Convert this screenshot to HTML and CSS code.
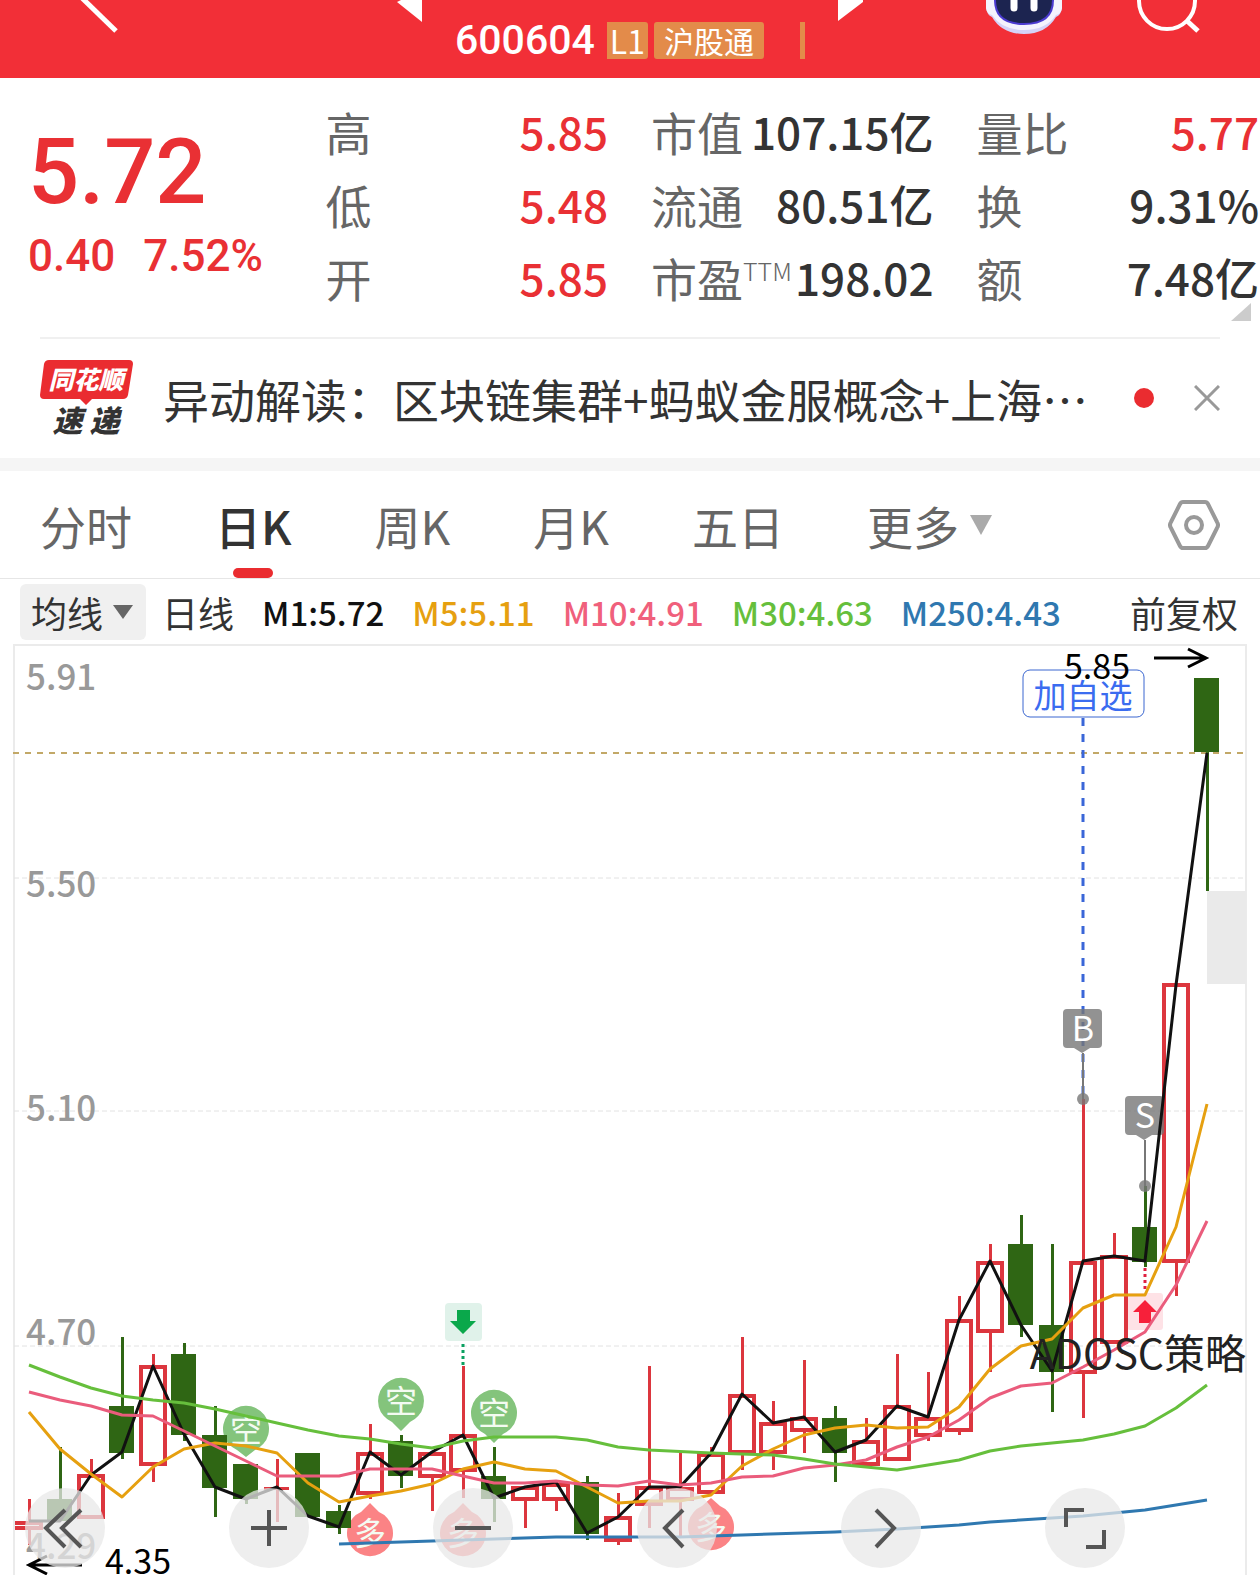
FILE: index.html
```html
<!DOCTYPE html>
<html lang="zh-CN">
<head>
  <meta charset="UTF-8">
  <meta name="viewport" content="width=device-width, initial-scale=1.0">
  <title>600604 日K</title>
  <link rel="stylesheet" href="styles.css">
</head>
<body>
  <header class="topbar">
    <button class="icon-btn back" type="button" aria-label="返回">
      <svg width="40" height="34" viewBox="0 0 40 34"><path d="M1 -3L36 31" stroke="#fff" stroke-width="5" fill="none"/></svg>
    </button>
    <button class="icon-btn" type="button" aria-label="上一只">
      <svg width="25" height="22" viewBox="0 0 25 22"><path d="M4 0L0 2L25 22V0Z" fill="#fff"/></svg>
    </button>
    <div class="stock">
      <span class="code">600604</span>
      <span class="tag tag-level">L1</span>
      <span class="tag">沪股通</span>
      <span class="tag-edge"></span>
    </div>
    <button class="icon-btn" type="button" aria-label="下一只">
      <svg width="25" height="22" viewBox="0 0 25 22"><path d="M0 0H25V2L0 21Z" fill="#fff"/></svg>
    </button>
    <button class="icon-btn robot" type="button" aria-label="助手">
      <svg width="76" height="35" viewBox="0 0 76 35">
        <path d="M0 0H76V8Q75 15 70 17Q60 34 38 34Q16 34 6 17Q1 15 0 8Z" fill="#d5d3f8"/>
        <path d="M0 0H76V8Q75 14 70 15Q60 30 38 30Q16 30 6 15Q1 14 0 8Z" fill="#f4f3fd"/>
        <path d="M8 0H68Q68 25 38 25Q8 25 8 0Z" fill="#4b3bd0"/>
        <path d="M10 0H66Q66 23 38 23Q10 23 10 0Z" fill="#1c2450"/>
        <path d="M28 -4V8M48 -4V8" stroke="#fff" stroke-width="7" stroke-linecap="round"/>
      </svg>
    </button>
    <button class="icon-btn search" type="button" aria-label="搜索">
      <svg width="64" height="34" viewBox="0 0 64 34">
        <circle cx="31" cy="1" r="28" fill="none" stroke="#fff" stroke-width="4"/>
        <path d="M50 20L62 31" stroke="#fff" stroke-width="5"/>
      </svg>
    </button>
  </header>

  <section class="quote">
    <div class="price-box">
      <div class="price">5.72</div>
      <div class="change"><span>0.40</span><span>7.52%</span></div>
    </div>
    <dl class="stats">
      <div><dt>高</dt><dd class="up">5.85</dd></div>
      <div><dt>低</dt><dd class="up">5.48</dd></div>
      <div><dt>开</dt><dd class="up">5.85</dd></div>
    </dl>
    <dl class="stats">
      <div><dt>市值</dt><dd>107.15亿</dd></div>
      <div><dt>流通</dt><dd>80.51亿</dd></div>
      <div><dt>市盈<small>TTM</small></dt><dd>198.02</dd></div>
    </dl>
    <dl class="stats">
      <div><dt>量比</dt><dd class="up">5.77</dd></div>
      <div><dt>换</dt><dd>9.31%</dd></div>
      <div><dt>额</dt><dd>7.48亿</dd></div>
    </dl>
    <svg class="corner" width="20" height="18" viewBox="0 0 20 18"><path d="M20 0V18H0Z" fill="#ccc"/></svg>
  </section>

  <section class="news">
    <svg class="news-logo" width="94" height="78" viewBox="0 0 94 78">
      <path d="M9 1H89Q93 1 93 5L88 36Q87 40 83 40H52L46 46L40 40H4Q0 40 0 36L4 5Q5 1 9 1Z" fill="#ea2c30"/>
      <text class="logo-top" x="46" y="30">同花顺</text>
      <text class="logo-sub" x="46" y="73">速 递</text>
    </svg>
    <a class="news-title" href="#">异动解读：区块链集群+蚂蚁金服概念+上海…</a>
    <span class="dot"></span>
    <button class="icon-btn close" type="button" aria-label="关闭">
      <svg width="26" height="26" viewBox="0 0 26 26"><path d="M1 1L25 25M25 1L1 25" stroke="#999" stroke-width="3"/></svg>
    </button>
  </section>

  <nav class="tabs">
    <button type="button">分时</button>
    <button type="button" class="active">日K</button>
    <button type="button">周K</button>
    <button type="button">月K</button>
    <button type="button">五日</button>
    <button type="button" class="more">更多<svg width="24" height="20" viewBox="0 0 24 20"><path d="M1 0H23L12 20Z" fill="#aaa"/></svg></button>
    <button type="button" class="settings" aria-label="设置">
      <svg width="52" height="50" viewBox="0 0 52 50" fill="none" stroke="#999" stroke-width="4">
        <path d="M15 2H37Q39 2 40 4L49 22Q51 25 49 28L40 46Q39 48 37 48H15Q13 48 12 46L3 28Q1 25 3 22L12 4Q13 2 15 2Z"/>
        <circle cx="26" cy="25" r="8"/>
      </svg>
    </button>
  </nav>

  <div class="legend">
    <div class="picker">
      <select aria-label="指标"><option>均线</option></select>
      <svg width="20" height="14" viewBox="0 0 20 14"><path d="M0 0H20L10 14Z" fill="#666"/></svg>
    </div>
    <span class="period">日线</span>
    <span class="m1">M1:5.72</span>
    <span class="m5">M5:5.11</span>
    <span class="m10">M10:4.91</span>
    <span class="m30">M30:4.63</span>
    <span class="m250">M250:4.43</span>
    <a class="adjust" href="#">前复权</a>
  </div>

  <section class="chart">
    <svg class="kline" viewBox="0 644 1260 931">
      <!-- frame and grid -->
      <path d="M14 1575V645H1246V1575" fill="none" stroke="#ebebeb" stroke-width="2"/>
      <path d="M14 878H1246M14 1111H1246M14 1346H1246" stroke="#e2e2e2" stroke-dasharray="5 3"/>
      <path d="M13 753H1246" stroke="#c2a867" stroke-width="2" stroke-dasharray="6 6"/>
      <rect x="1207" y="891" width="39" height="93" fill="#eaeaea"/>

      <g class="axis">
        <text x="26" y="690">5.91</text>
        <text x="26" y="897">5.50</text>
        <text x="26" y="1121">5.10</text>
        <text x="26" y="1345">4.70</text>
        <text x="26" y="1559">4.29</text>
      </g>

      <!-- long / short pins -->
      <g class="pin-short">
        <path d="M246 1457L237 1450A23 23 0 1 1 255 1450Z"/><text x="246" y="1442">空</text>
        <path d="M401 1431L392 1422A23 23 0 1 1 410 1422Z"/><text x="401" y="1413">空</text>
        <path d="M494 1443L485 1434A23 23 0 1 1 503 1434Z"/><text x="494" y="1425">空</text>
      </g>
      <g class="pin-long">
        <path d="M370 1503L379 1512A23 23 0 1 1 361 1512Z"/><text x="370" y="1545">多</text>
        <path d="M463 1503L472 1512A23 23 0 1 1 454 1512Z"/><text x="463" y="1545">多</text>
        <path d="M711 1498L720 1506A23 23 0 1 1 702 1506Z"/><text x="711" y="1539">多</text>
      </g>

      <!-- falling days -->
      <path class="wick-down" d="M60 1447V1521M122 1337V1459M184 1343V1441M215 1406V1517M246 1464V1504M339 1505V1534M401 1435V1488M494 1447V1522M587 1476V1540M835 1406V1482M1021 1215V1337M1052 1244V1412M1145 1186V1267M1207 678V891"/>
      <g class="body-down">
        <rect x="47" y="1499" width="25" height="22"/>
        <rect x="109" y="1406" width="25" height="47"/>
        <rect x="171" y="1354" width="25" height="81"/>
        <rect x="202" y="1435" width="25" height="53"/>
        <rect x="233" y="1464" width="25" height="35"/>
        <rect x="295" y="1453" width="25" height="64"/>
        <rect x="326" y="1511" width="25" height="17"/>
        <rect x="388" y="1441" width="25" height="35"/>
        <rect x="481" y="1476" width="25" height="23"/>
        <rect x="574" y="1482" width="25" height="52"/>
        <rect x="822" y="1418" width="25" height="35"/>
        <rect x="1008" y="1244" width="25" height="81"/>
        <rect x="1039" y="1325" width="25" height="47"/>
        <rect x="1132" y="1227" width="25" height="35"/>
        <rect x="1194" y="678" width="25" height="74"/>
      </g>

      <!-- rising days -->
      <path class="wick-up" d="M29 1499V1521M29 1529V1545M91 1459V1474M153 1354V1365M153 1465V1482M277 1459V1522M264 1488H289M370 1424V1452M370 1494V1499M432 1477V1511M463 1366V1434M463 1471V1498M525 1500V1528M556 1500V1511M618 1493V1516M618 1541V1545M649 1366V1487M649 1506V1528M680 1453V1488M680 1500V1536M711 1447V1453M742 1337V1394M742 1453V1470M773 1401V1423M773 1453V1470M804 1360V1417M804 1431V1453M866 1418V1440M897 1354V1405M928 1372V1417M928 1436V1441M959 1296V1319M959 1431V1435M990 1244V1261M990 1332V1372M1083 1099V1261M1083 1373V1418M1114 1233V1255M1176 1263V1296"/>
      <g class="body-up">
        <path d="M15 1523H41V1528H15"/>
        <rect x="79" y="1476" width="24" height="41"/>
        <rect x="141" y="1367" width="24" height="97"/>
        <rect x="358" y="1454" width="24" height="39"/>
        <rect x="420" y="1454" width="24" height="22"/>
        <rect x="451" y="1436" width="24" height="34"/>
        <rect x="513" y="1488" width="24" height="11"/>
        <rect x="544" y="1485" width="24" height="14"/>
        <rect x="606" y="1518" width="24" height="22"/>
        <rect x="637" y="1488" width="24" height="16"/>
        <rect x="668" y="1489" width="24" height="10"/>
        <rect x="699" y="1455" width="24" height="37"/>
        <rect x="730" y="1396" width="24" height="56"/>
        <rect x="761" y="1424" width="24" height="28"/>
        <rect x="792" y="1419" width="24" height="11"/>
        <rect x="854" y="1442" width="24" height="22"/>
        <rect x="885" y="1407" width="24" height="52"/>
        <rect x="916" y="1419" width="24" height="16"/>
        <rect x="947" y="1321" width="24" height="109"/>
        <rect x="978" y="1263" width="24" height="68"/>
        <rect x="1071" y="1263" width="24" height="109"/>
        <rect x="1102" y="1257" width="24" height="85"/>
        <rect x="1164" y="985" width="24" height="276"/>
      </g>

      <!-- buy / sell signals -->
      <rect x="445" y="1303" width="37" height="38" rx="4" fill="#e0f2ea"/>
      <path d="M457 1310H470V1321H476L463 1334L450 1321H457Z" fill="#0aa84b"/>
      <path d="M463 1344V1367" stroke="#0aa060" stroke-width="3" stroke-dasharray="3 3"/>
      <rect x="1127" y="1293" width="36" height="37" rx="3" fill="#f7203a" fill-opacity="0.13"/>
      <path d="M1145 1300L1157 1312H1151V1323H1139V1312H1133Z" fill="#f7203a"/>
      <path d="M1145 1268V1291" stroke="#e02040" stroke-width="3" stroke-dasharray="3 3"/>

      <!-- watchlist marker -->
      <rect x="1023" y="670" width="121" height="47" rx="7" fill="#fff" stroke="#3a66d0"/>
      <text class="watch" x="1083" y="708">加自选</text>
      <path d="M1083 718V1098" stroke="#3a66d8" stroke-width="3" stroke-dasharray="8 8"/>
      <g class="flag">
        <path d="M1083 1053V1099M1145 1140V1186"/>
        <path d="M1067 1009H1098Q1102 1009 1102 1013V1044Q1102 1048 1098 1048H1090L1082 1053L1074 1048H1067Q1063 1048 1063 1044V1013Q1063 1009 1067 1009Z"/>
        <path d="M1129 1096H1160Q1164 1096 1164 1100V1131Q1164 1135 1160 1135H1152L1144 1140L1136 1135H1129Q1125 1135 1125 1131V1100Q1125 1096 1129 1096Z"/>
        <circle cx="1083" cy="1099" r="6"/>
        <circle cx="1145" cy="1186" r="6"/>
        <text x="1083" y="1041">B</text>
        <text x="1145" y="1128">S</text>
      </g>

      <!-- moving averages -->
      <g class="ma">
        <polyline class="line-m250" points="339,1544 432,1541 556,1537 680,1537 742,1535 835,1532 897,1529 959,1525 990,1522 1052,1518 1083,1516 1145,1510 1207,1500"/>
        <polyline class="line-m1" points="29,1521 60,1521 91,1475 122,1452 153,1366 184,1434 215,1487 246,1499 277,1487 308,1516 339,1527 370,1452 401,1475 432,1452 463,1435 494,1498 525,1487 556,1482 587,1533 618,1517 649,1487 680,1487 711,1453 742,1394 773,1423 804,1417 835,1452 866,1440 897,1406 928,1417 959,1320 990,1261 1021,1325 1052,1371 1083,1261 1114,1256 1145,1261 1176,985 1207,753"/>
        <polyline class="line-m5" points="29,1412 60,1449 91,1474 122,1497 153,1467 184,1449 215,1443 246,1446 277,1453 308,1483 339,1502 370,1496 401,1491 432,1484 463,1469 494,1462 525,1469 556,1471 587,1487 618,1503 649,1501 680,1501 711,1495 742,1466 773,1449 804,1435 835,1428 866,1425 897,1428 928,1427 959,1407 990,1369 1021,1346 1052,1339 1083,1308 1114,1295 1145,1295 1176,1227 1207,1104"/>
        <polyline class="line-m10" points="29,1392 60,1400 91,1406 122,1415 153,1416 184,1431 215,1446 246,1461 277,1476 308,1476 339,1476 370,1469 401,1469 432,1469 463,1476 494,1483 525,1483 556,1481 587,1485 618,1486 649,1481 680,1485 711,1483 742,1477 773,1476 804,1468 835,1465 866,1460 897,1447 928,1437 959,1420 990,1398 1021,1386 1052,1383 1083,1367 1114,1350 1145,1332 1176,1285 1207,1221"/>
        <polyline class="line-m30" points="29,1365 60,1377 91,1388 122,1396 153,1400 184,1403 215,1409 246,1416 277,1423 308,1430 339,1436 370,1439 401,1444 432,1448 463,1441 494,1437 556,1437 587,1440 618,1447 649,1450 711,1453 773,1455 804,1459 835,1464 866,1467 897,1470 928,1465 959,1460 990,1451 1021,1446 1083,1440 1114,1434 1145,1426 1176,1408 1207,1385"/>
      </g>

      <!-- high / low of the visible range -->
      <text class="extreme" x="1064" y="679">5.85</text>
      <path class="arrow" d="M1154 658H1206M1188 649L1206 658L1188 667"/>
      <text class="extreme" x="105" y="1574">4.35</text>
      <path class="arrow" d="M82 1565H29M47 1556L29 1565L47 1574"/>
      <text class="strategy" x="1246" y="1369">ADOSC策略</text>
    </svg>

    <div class="controls">
      <button type="button" aria-label="最早"><svg viewBox="0 0 80 80"><path d="M40 22L21 40L40 59M56 22L37 40L56 59"/></svg></button>
      <button type="button" aria-label="放大"><svg viewBox="0 0 80 80"><path d="M22 40H58M40 22V58"/></svg></button>
      <button type="button" aria-label="缩小"><svg viewBox="0 0 80 80"><path d="M22 40H58"/></svg></button>
      <button type="button" aria-label="左移"><svg viewBox="0 0 80 80"><path d="M46 22L28 40L46 59"/></svg></button>
      <button type="button" aria-label="右移"><svg viewBox="0 0 80 80"><path d="M35 22L53 40L35 59"/></svg></button>
      <button type="button" aria-label="全屏"><svg viewBox="0 0 80 80"><path d="M21 39V22H39M59 42V59H41"/></svg></button>
    </div>
  </section>
</body>
</html>
```
FILE: styles.css
```css
* {
  box-sizing: border-box;
}
body {
  margin: 0;
  background: #fff;
  color: #333;
  font-family: "Noto Sans CJK SC", sans-serif;
}
button,
select {
  font-family: inherit;
  color: inherit;
  background: none;
  border: none;
  padding: 0;
  margin: 0;
}
svg {
  display: block;
}
a {
  color: inherit;
  text-decoration: none;
}

/* figures */
.code,
.price,
.change {
  font-family: Roboto, "Noto Sans CJK SC", sans-serif;
  font-weight: 500;
}

/* top bar */
.topbar {
  display: grid;
  grid-template-columns: 397fr 25px 416fr 25px 123fr 76px 74fr 64px 60fr;
  height: 78px;
  background: #f22f37;
  color: #fff;
}
.icon-btn {
  display: block;
  align-self: start;
}
.back {
  padding-left: 80px;
}
.robot {
  grid-column: 6;
}
.search {
  grid-column: 8;
}
.stock {
  display: flex;
  align-items: center;
  justify-content: center;
  gap: 6px;
  padding-top: 2px;
}
.code {
  margin-right: 6px;
  font-size: 41px;
  line-height: 72px;
}
.tag {
  height: 37px;
  padding: 0 10px;
  border-radius: 3px;
  background: #e38b4a;
  font-size: 30px;
  line-height: 37px;
}
.tag-level {
  padding: 0 3px;
  border-radius: 0 3px 3px 0;
  font-size: 32px;
}
.tag-edge {
  width: 5px;
  height: 37px;
  margin-left: 30px;
  background: #e38b4a;
}

/* quote */
.quote {
  position: relative;
  display: grid;
  grid-template-columns: 254fr 282fr 282fr 282fr;
  column-gap: 43px;
  padding: 17px 1px 23px 28px;
}
.price-box,
.stats .up {
  color: #e93034;
}
.price {
  padding-top: 25px;
  font-size: 90px;
  line-height: 106px;
}
.change {
  display: flex;
  gap: 28px;
  font-size: 44px;
  line-height: 60px;
}
.stats {
  margin: 0;
}
.stats div {
  display: flex;
  justify-content: space-between;
  height: 73px;
  line-height: 73px;
  white-space: nowrap;
}
.stats dt {
  font-size: 46px;
  color: #666;
}
.stats dd {
  margin: 0;
  font-size: 44px;
  font-weight: 500;
}
.stats small {
  font-size: 25px;
  font-weight: 300;
  line-height: 1;
  vertical-align: 16px;
}
.corner {
  position: absolute;
  right: 9px;
  bottom: 16px;
}

/* news */
.news {
  display: flex;
  align-items: center;
  height: 121px;
  margin: 0 40px;
  padding-bottom: 2px;
  border-top: 2px solid #f0f0f0;
}
.news-logo {
  overflow: visible;
}
.news-title {
  flex: 1;
  margin-left: 29px;
  font-size: 46px;
  line-height: 64px;
  white-space: nowrap;
}
.logo-top,
.logo-sub {
  font-style: italic;
  font-weight: 900;
  text-anchor: middle;
}
.logo-top {
  fill: #fff;
  font-size: 25px;
}
.logo-sub {
  fill: #333;
  font-size: 30px;
}
.dot {
  width: 20px;
  height: 20px;
  border-radius: 50%;
  background: #ea2c30;
}
.close {
  align-self: center;
  margin-left: 40px;
}

/* tabs */
.tabs {
  display: flex;
  align-items: center;
  gap: 83px;
  height: 121px;
  padding: 0 40px;
  border-top: 13px solid #f5f5f5;
  border-bottom: 1px solid #e6e6e6;
}
.tabs button {
  position: relative;
  height: 107px;
  font-size: 46px;
  color: #666;
  white-space: nowrap;
}
.tabs .active {
  font-weight: 500;
  color: #333;
}
.tabs .active::after {
  content: "";
  position: absolute;
  left: 50%;
  bottom: 0;
  width: 40px;
  height: 10px;
  margin-left: -20px;
  border-radius: 5px;
  background: #ea2c30;
}
.tabs .more {
  display: flex;
  align-items: center;
  gap: 10px;
}
.tabs .settings {
  margin-left: auto;
}

/* legend */
.legend {
  display: flex;
  align-items: center;
  gap: 28px;
  height: 65px;
  padding: 0 22px 0 20px;
  white-space: nowrap;
}
.picker {
  position: relative;
  display: flex;
  align-items: center;
  width: 126px;
  height: 56px;
  margin-right: -12px;
  border-radius: 6px;
  background: #f0f0f0;
}
.picker select {
  width: 100%;
  height: 56px;
  padding-left: 11px;
  appearance: none;
  font-size: 36px;
}
.picker svg {
  position: absolute;
  right: 13px;
  pointer-events: none;
}
.legend span {
  font-size: 33px;
  font-weight: 500;
  line-height: 56px;
}
.legend .period {
  font-size: 36px;
  font-weight: 400;
}
.m1 {
  color: #111;
}
.m5 {
  color: #e6a010;
}
.m10 {
  color: #f0607c;
}
.m30 {
  color: #66bf3c;
}
.m250 {
  color: #2f78b0;
}
.adjust {
  margin-left: auto;
  font-size: 36px;
  line-height: 56px;
}

/* k-line chart */
.chart {
  position: relative;
}
.kline {
  width: 100%;
  height: auto;
}
.axis text {
  fill: #999;
  font-size: 35px;
  font-weight: 500;
}
.wick-up,
.body-up {
  fill: none;
  stroke: #dc363e;
  stroke-width: 3;
}
.body-up {
  stroke-width: 4;
}
.wick-down {
  fill: none;
  stroke: #2f6614;
  stroke-width: 3;
}
.wick-up,
.wick-down {
  shape-rendering: crispEdges;
}
.body-down {
  fill: #2f6614;
}
.pin-short path {
  fill: #84c47c;
}
.pin-long path {
  fill: #fb8385;
}
.pin-short text,
.pin-long text {
  fill: #f4fbf2;
  font-size: 32px;
  text-anchor: middle;
}
.ma {
  fill: none;
  stroke-width: 3;
  stroke-linejoin: round;
}
.line-m1 {
  stroke: #111;
}
.line-m5 {
  stroke: #e6a010;
}
.line-m10 {
  stroke: #ea5c7c;
}
.line-m30 {
  stroke: #66bf3c;
}
.line-m250 {
  stroke: #2f78b0;
}
.watch {
  fill: #3b6cf0;
  font-size: 33px;
  text-anchor: middle;
}
.flag path,
.flag circle {
  fill: #777;
  fill-opacity: 0.8;
}
.flag path:first-child {
  stroke: #777;
  stroke-width: 2;
}
.flag text {
  fill: #fff;
  font-size: 34px;
  text-anchor: middle;
}
.extreme {
  fill: #000;
  font-size: 34px;
}
.arrow {
  fill: none;
  stroke: #000;
  stroke-width: 3;
}
.strategy {
  fill: #222;
  font-size: 41px;
  text-anchor: end;
}
.controls {
  position: absolute;
  left: 2%;
  right: 135px;
  bottom: 7px;
  display: flex;
  justify-content: space-between;
}
.controls button {
  width: 80px;
  height: 80px;
  border-radius: 50%;
  background: rgba(232, 232, 232, 0.75);
}
.controls path {
  fill: none;
  stroke: #555;
  stroke-width: 4;
}
```
